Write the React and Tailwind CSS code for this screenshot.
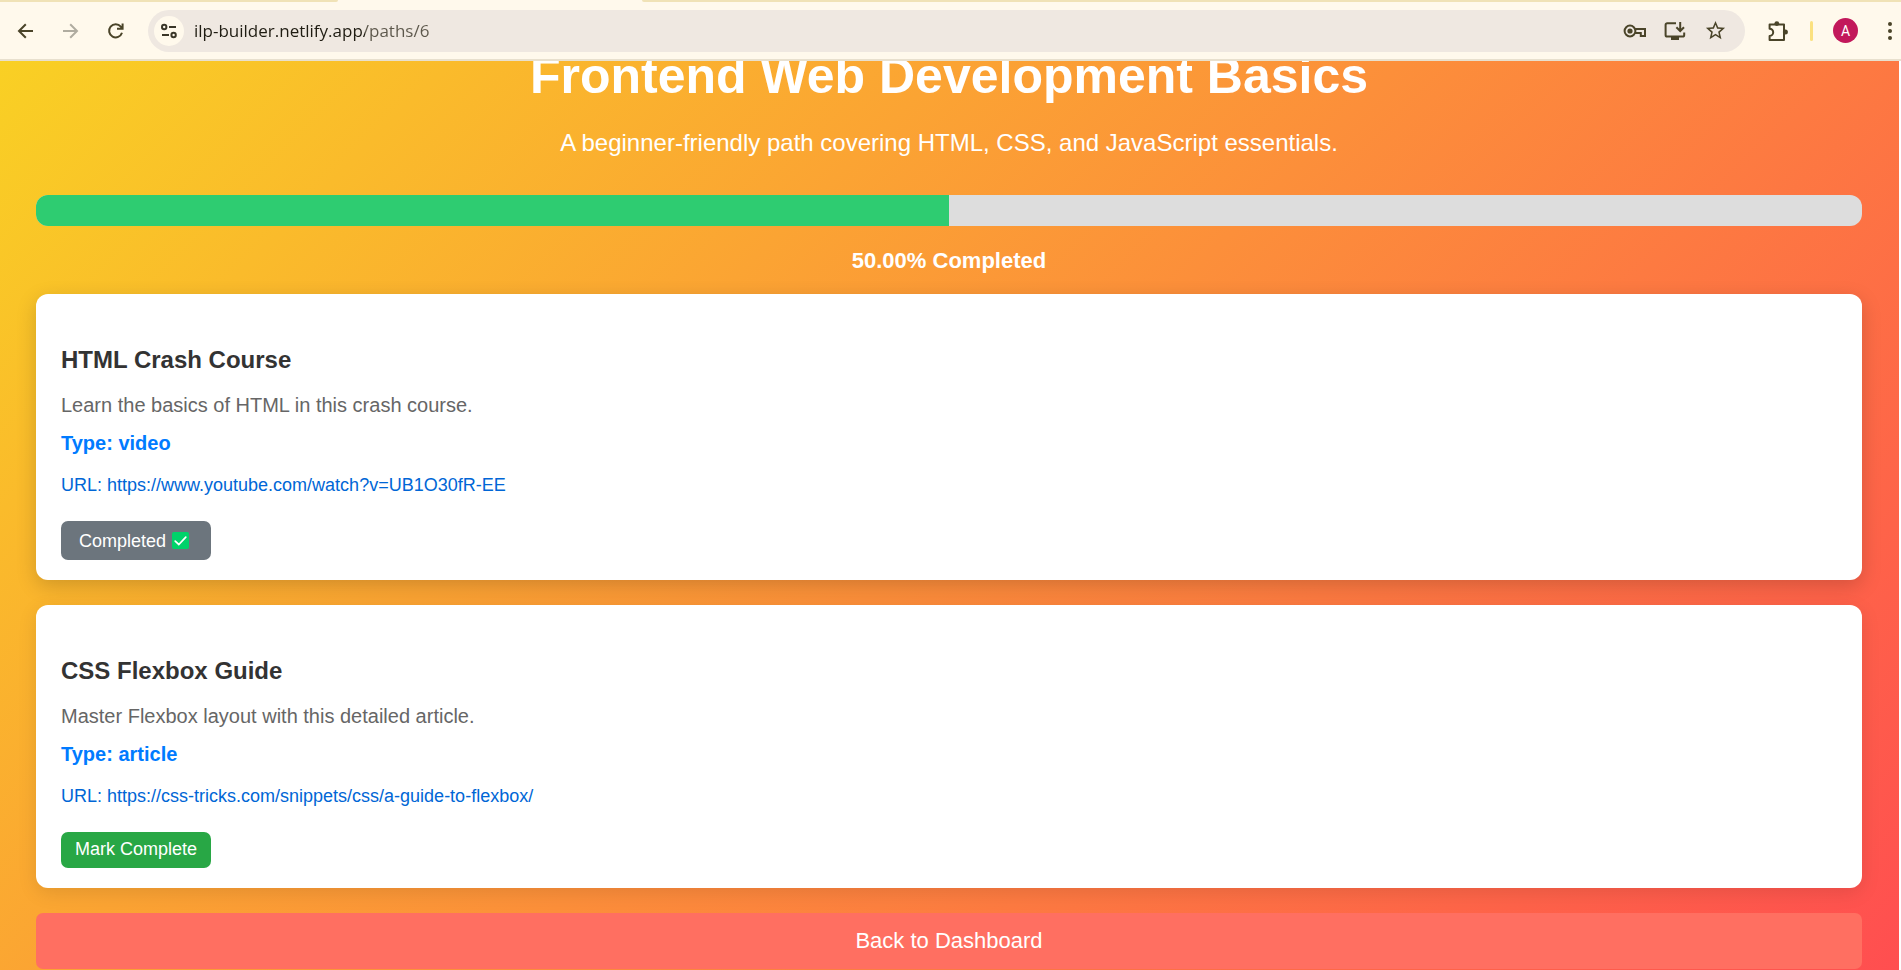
import { MdStarBorder } from "react-icons/md";

const resources = [
  {
    title: "HTML Crash Course",
    description: "Learn the basics of HTML in this crash course.",
    type: "video",
    url: "https://www.youtube.com/watch?v=UB1O30fR-EE",
    done: true,
  },
  {
    title: "CSS Flexbox Guide",
    description: "Master Flexbox layout with this detailed article.",
    type: "article",
    url: "https://css-tricks.com/snippets/css/a-guide-to-flexbox/",
    done: false,
  },
];

const strokeProps = { fill: "none", stroke: "currentColor", strokeWidth: 2 };

function IconButton({ label, className = "", children }) {
  return (
    <button type="button" aria-label={label} className={`flex h-6 min-w-6 shrink-0 items-center justify-center ${className}`}>
      {children}
    </button>
  );
}

function BrowserBar() {
  return (
    <header className="border-b-2 border-[#e8e0ce] bg-[#fff9ec] text-[#4a4429]">
      <div className="flex h-0.5">
        <div className="w-[338px] rounded-br-full bg-[#f0e2b6]" />
        <div className="w-[304px]" />
        <div className="grow rounded-bl-full bg-[#f0e2b6]" />
      </div>
      <div className="flex h-[57px] items-center pl-[14px]">
        <div className="flex gap-[21px]">
          <IconButton label="Back">
            <svg viewBox="0 0 24 24" className="size-6" {...strokeProps}>
              <path d="M19 12H5M11.8 5.2L5 12l6.800 6.800" />
            </svg>
          </IconButton>
          <IconButton label="Forward" className="text-[#b0aca0]">
            <svg viewBox="0 0 24 24" className="size-6" {...strokeProps}>
              <path d="M4 12H18M11.2 5.200l6.800 6.800-6.800 6.800" />
            </svg>
          </IconButton>
          <IconButton label="Reload">
            <svg viewBox="0 0 24 24" className="size-6" {...strokeProps}>
              <path d="M18 13.800A6.600 6.600 0 1 1 16.800 7.600l1.800 2.200M18.600 4.600v5.200h-5.600" />
            </svg>
          </IconButton>
        </div>
        <div className="ml-5 flex h-[42px] grow items-center gap-4 rounded-full bg-[#efe8e1] pr-[18px] pl-1.5">
          <button type="button" aria-label="Site information" className="flex size-[30px] shrink-0 items-center justify-center rounded-full bg-[#fff9ec] text-[#3a3628]">
            <svg viewBox="0 0 20 20" className="size-5" {...strokeProps}>
              <circle cx="5.2" cy="6" r="2.2" />
              <path d="M10 6h7M3 14h7" />
              <circle cx="14.6" cy="14" r="2.2" />
            </svg>
          </button>
          <input
            aria-label="Address"
            readOnly
            value="ilp-builder.netlify.app/paths/6"
            className="-ml-1.5 min-w-0 grow bg-[linear-gradient(to_right,#1f1c12_171px,#5c574b_171px)] bg-clip-text font-['Open_Sans','Noto_Sans',sans-serif] text-[17px] leading-6 text-transparent outline-none"
          />
          <IconButton label="Saved passwords">
            <svg viewBox="0 0 24 16" className="h-4 w-6" {...strokeProps}>
              <circle cx="7" cy="8" r="5.4" />
              <circle cx="7" cy="8" r="2.6" fill="currentColor" stroke="none" />
              <path d="M12 6H22v7h-4.2v-3H12" />
            </svg>
          </IconButton>
          <IconButton label="Install app">
            <svg viewBox="0 0 22 20" className="h-5 w-[22px]" {...strokeProps}>
              <path d="M12 2.200H3.200A1.600 1.600 0 0 0 1.600 3.800V14a1.600 1.600 0 0 0 1.600 1.600h15.400a1.600 1.600 0 0 0 1.600-1.600v-2.400" />
              <path d="M7 15h8v4H7z" fill="currentColor" stroke="none" />
              <path d="M16.200 1v8.600M12.400 6.200l3.800 3.800L20 6.200" />
            </svg>
          </IconButton>
          <IconButton label="Bookmark this page">
            <MdStarBorder size={23} />
          </IconButton>
        </div>
        <IconButton label="Extensions" className="ml-[21px]">
          <svg viewBox="0 0 20 20" className="size-5" {...strokeProps}>
            <path d="M1.600 3.600h14.400v15.400h-14.400v-4.100a3.600 3.600 0 0 0 0-7.200z" strokeLinejoin="round" />
            <circle cx="8.800" cy="2.600" r="2.400" fill="currentColor" stroke="none" />
            <circle cx="17.400" cy="11" r="2.500" fill="currentColor" stroke="none" />
          </svg>
        </IconButton>
        <div className="ml-5 h-5 w-[3px] rounded-full bg-[#fbe180]" />
        <button type="button" aria-label="Profile" className="ml-5 flex size-[25px] shrink-0 items-center justify-center rounded-full bg-[#c2185b] font-['Roboto',sans-serif] text-sm text-white">
          A
        </button>
        <button type="button" aria-label="Menu" className="ml-5 flex h-6 w-[23px] shrink-0 items-center justify-center">
          <svg viewBox="0 0 4 20" className="h-5 w-1" fill="currentColor">
            <circle cx="2" cy="3" r="2" />
            <circle cx="2" cy="10" r="2" />
            <circle cx="2" cy="17" r="2" />
          </svg>
        </button>
      </div>
    </header>
  );
}

function CheckMark() {
  return (
    <svg viewBox="0 0 18 18" className="size-[17px]" role="img" aria-label="done">
      <rect width="18" height="18" rx="2" fill="#00d26a" />
      <path d="M3.400 9.600l3.800 3.600 7.400-7.800" fill="none" stroke="#fff" strokeWidth="1.800" strokeLinecap="round" />
    </svg>
  );
}

function ResourceCard({ title, description, type, url, done }) {
  return (
    <article
      className={`rounded-xl bg-white px-[25px] pt-[52px] pb-5 ${
        done ? "shadow-[0_6px_20px_rgba(0,0,0,0.17)]" : "shadow-[0_5px_19px_rgba(0,0,0,0.1)]"
      }`}
    >
      <h3 className="text-2xl leading-7 font-bold text-[#333]">{title}</h3>
      <p className="mt-[19px] text-xl leading-6 text-[#666]">{description}</p>
      <p className="mt-[14px] text-xl leading-6 font-bold text-[#007bff]">Type: {type}</p>
      <a href={url} className="mt-5 block text-lg leading-5 text-[#0066d6]">
        URL: {url}
      </a>
      {done ? (
        <button type="button" className="mt-[26px] flex h-[39px] w-[150px] items-center gap-1.5 rounded-[7px] bg-[#6c757d] pl-[18px] text-lg text-white">
          Completed <CheckMark />
        </button>
      ) : (
        <button type="button" className="mt-[26px] h-9 w-[150px] rounded-[7px] bg-[#28a745] pb-0.5 text-lg leading-5 text-white">
          Mark Complete
        </button>
      )}
    </article>
  );
}

export default function App() {
  const progress = 50;
  return (
    <div className="flex h-screen flex-col overflow-hidden font-['Liberation_Sans',Arial,sans-serif]">
      <BrowserBar />
      <main className="mr-0.5 min-h-0 grow overflow-hidden bg-[linear-gradient(135deg,#f9d024,#ff4e50)] pr-[37px] pl-9">
        <h1 className="text-center text-[50px] leading-[30px] font-bold text-white">Frontend Web Development Basics</h1>
        <p className="mt-[38px] text-center text-2xl leading-7 text-white">
          A beginner-friendly path covering HTML, CSS, and JavaScript essentials.
        </p>
        <div
          role="progressbar"
          aria-label="Path progress"
          aria-valuenow={progress}
          className="mt-[38px] h-[31px] overflow-hidden rounded-xl bg-[#ddd]"
        >
          <div className="h-full bg-[#2ecc71]" style={{ width: `${progress}%` }} />
        </div>
        <p className="mt-[22px] text-center text-[22px] leading-[26px] font-bold text-white">{progress.toFixed(2)}% Completed</p>
        <div className="mt-5 flex flex-col gap-[25px]">
          {resources.map((resource) => (
            <ResourceCard key={resource.url} {...resource} />
          ))}
          <button type="button" className="h-14 rounded-[7px] bg-[#ff6f61] pb-0.5 text-[22px] text-white">
            Back to Dashboard
          </button>
        </div>
      </main>
    </div>
  );
}
